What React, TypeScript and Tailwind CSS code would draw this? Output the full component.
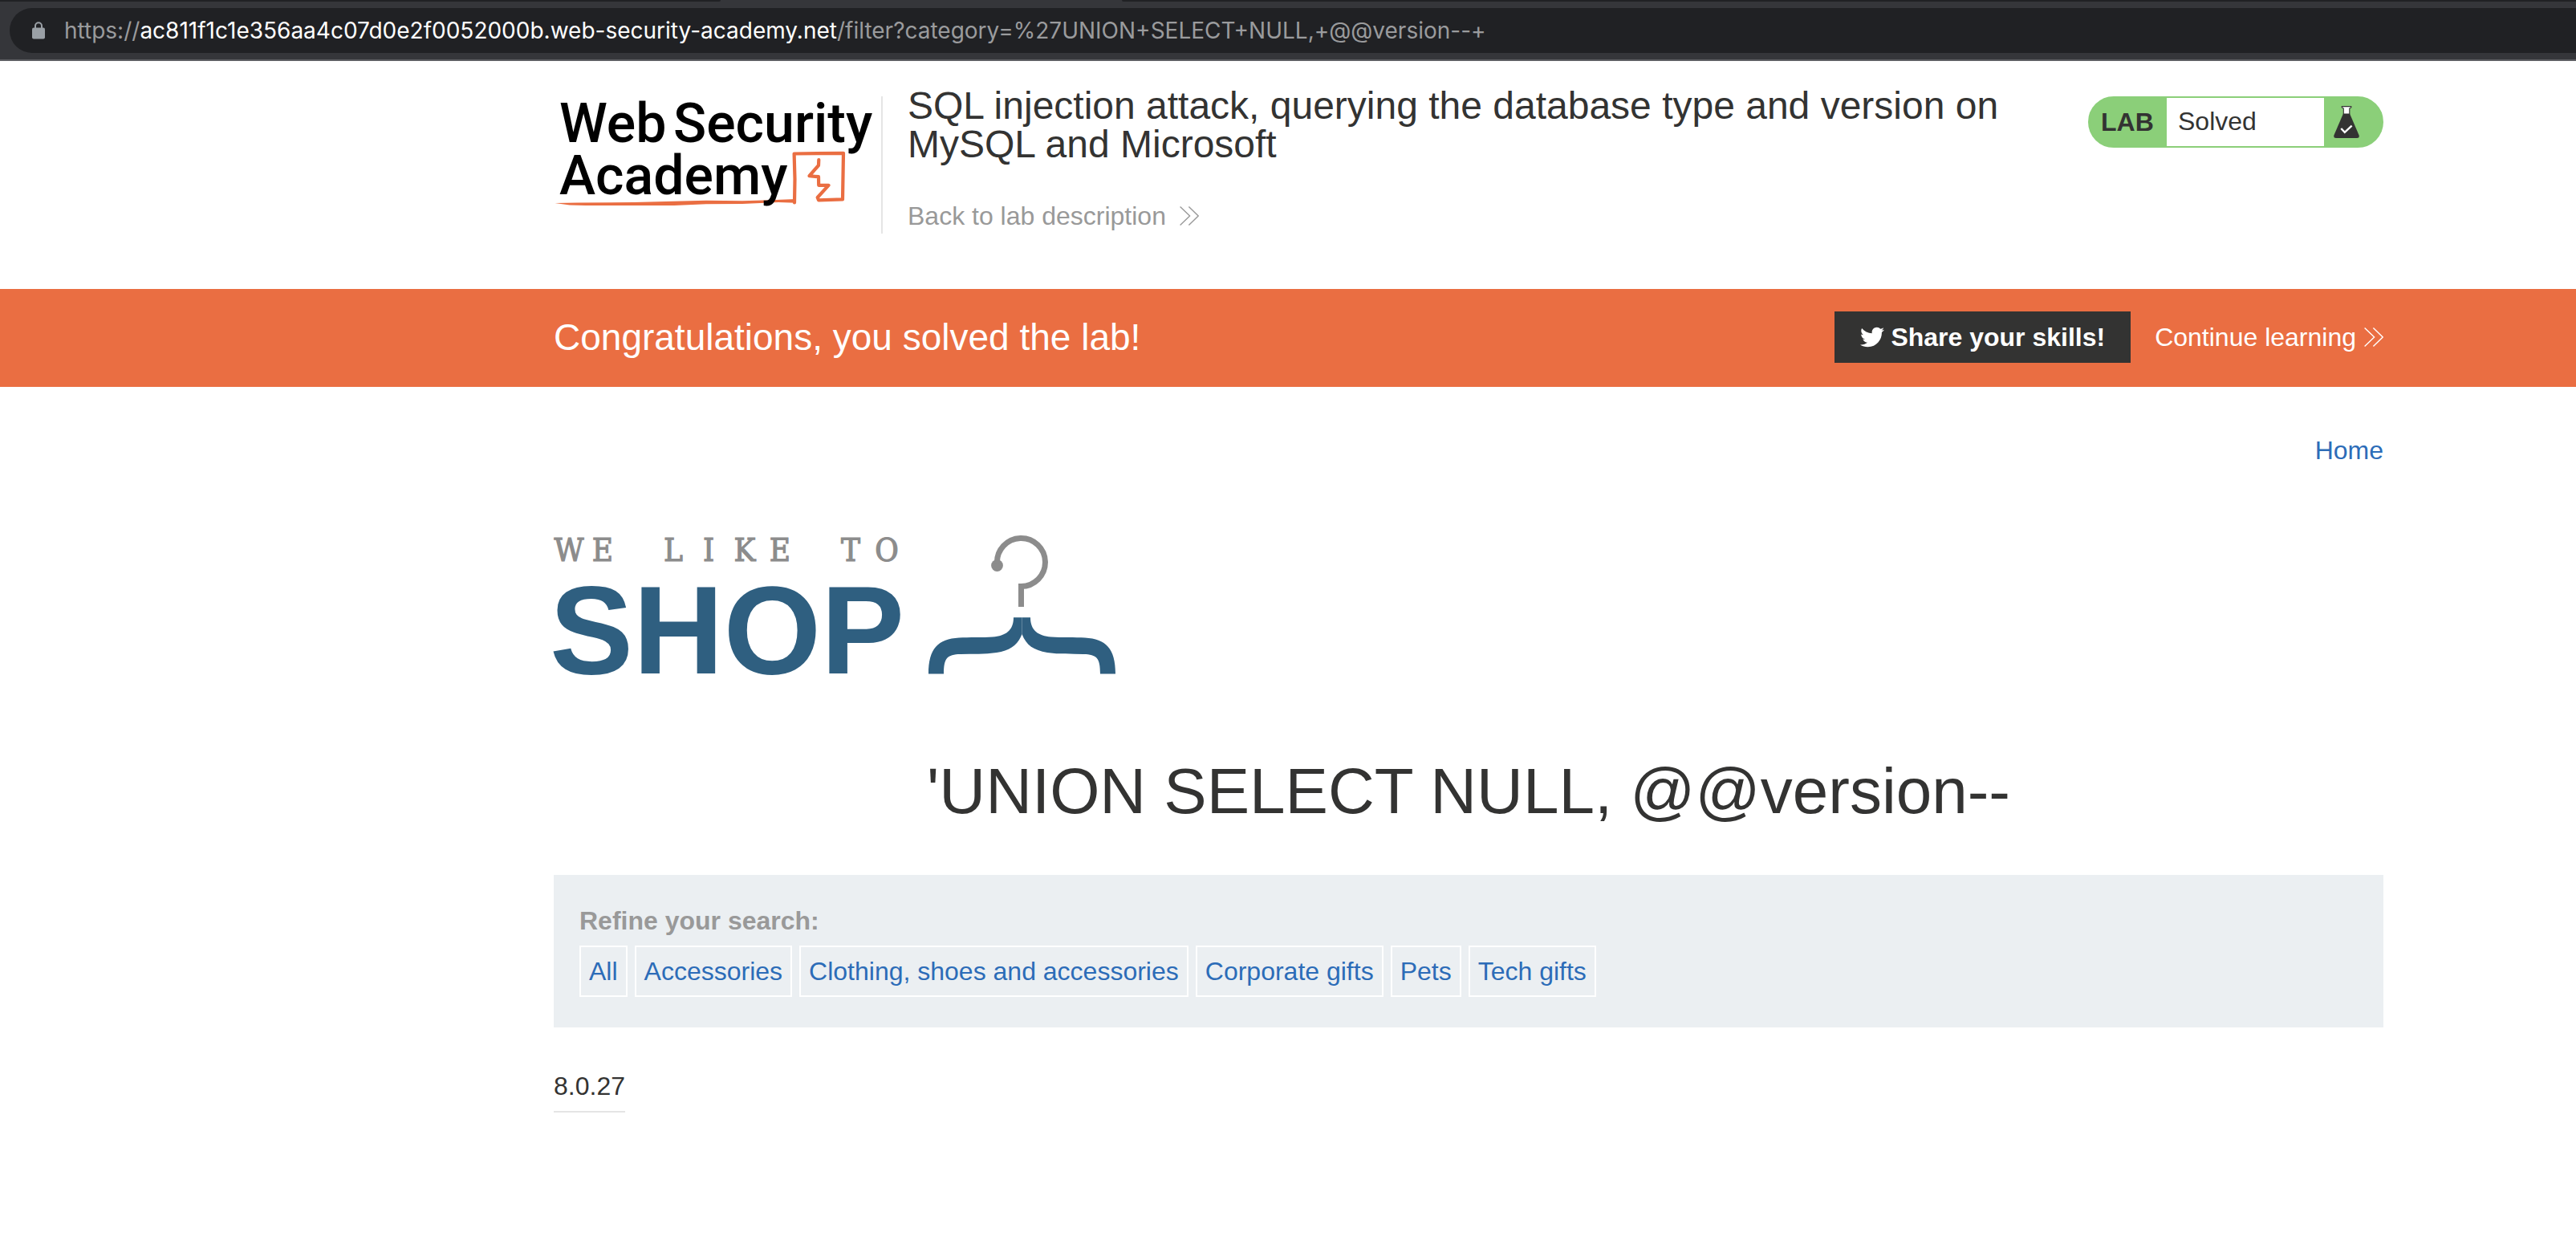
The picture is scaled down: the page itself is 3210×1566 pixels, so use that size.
import React from "react";
import { FaTwitter } from "react-icons/fa";

const categories = [
  "All",
  "Accessories",
  "Clothing, shoes and accessories",
  "Corporate gifts",
  "Pets",
  "Tech gifts",
];

function DoubleChevron() {
  return (
    <svg className="h-6 w-6 shrink-0" viewBox="0 0 24 24" fill="none" stroke="currentColor" strokeWidth="1.4" aria-hidden="true">
      <path d="M0.6 0.5 L12.6 12 L0.6 23.5" />
      <path d="M11.4 0.5 L23.2 12 L11.4 23.5" />
    </svg>
  );
}

function LockIcon() {
  return (
    <svg className="h-[22px] w-4 shrink-0" viewBox="0 0 16 22" aria-hidden="true">
      <path d="M4 8 V5.2 A4 4 0 0 1 12 5.2 V8" fill="none" stroke="#9aa0a6" strokeWidth="2" />
      <rect x="0" y="7.4" width="16" height="14" rx="2" fill="#9aa0a6" />
    </svg>
  );
}

function AcademyLogo() {
  return (
    <svg className="h-[140px] w-[400px] overflow-visible" viewBox="0 0 400 140" role="img" aria-label="Web Security Academy">
      <path
        d="M1.5 133 L30 132.4 L100 132 L190 129.8 L235 130.2 L270 129.2 L302 128 L302 132.8 L280 132 L235 134 L190 134.3 L150 136 L40 136 L20 135.6 Z"
        fill="#ea6e42"
      />
      <path
        d="M300 132.5 L300.5 103 L299.6 71.5 L361 70.8 L360 128.4 L330 129.3 L328.7 126 L342.5 110.8 L330.2 110.8 L330 100.2 L318.5 99.2 L330 86 L330.3 79"
        fill="none"
        stroke="#ea6e42"
        strokeWidth="4.2"
        strokeLinejoin="round"
        strokeLinecap="round"
      />
      <g className="font-['Roboto',sans-serif] font-medium text-[68px]" fill="#000">
        <text x="7" y="57">Web</text>
        <text x="149" y="57">Security</text>
        <text x="7" y="122">Academy</text>
      </g>
    </svg>
  );
}

const hangerArm =
  "M583.5 129.3 H594 C594 146 604 152 620 153.6 C632 154.6 650 153.8 662 154.6 C688 156 700 168 700 199.6 H681 C681 180 677 175.3 660 175 C645 174.6 630 175.4 615 173 C598 170 589 164 583.5 150 Z";

function ShopLogo() {
  return (
    <svg className="h-[210px] w-[710px] overflow-visible" viewBox="0 0 710 210" role="img" aria-label="We like to shop">
      <text
        x="19 61 105 149 193 238 282 326 370 415"
        y="59"
        textAnchor="middle"
        fill="#8c8c8c"
        stroke="#8c8c8c"
        strokeWidth="1.2"
        className="font-['DejaVu_Serif_Condensed','DejaVu_Serif',serif] text-[40px]"
      >
        WE LIKE TO
      </text>
      <text x="-5" y="199" fill="#2f5f80" className="font-['Liberation_Sans',Arial,sans-serif] text-[156px] font-bold">
        SHOP
      </text>
      <circle cx="552.5" cy="64.5" r="7.4" fill="#8c8c8c" />
      <path d="M552.5 62 A30 30 0 1 1 582.5 90.5 V116" fill="none" stroke="#8c8c8c" strokeWidth="7" />
      <path d={hangerArm} fill="#2f5f80" />
      <path d={hangerArm} fill="#2f5f80" transform="matrix(-1 0 0 1 1167 0)" />
    </svg>
  );
}

function FlaskIcon() {
  return (
    <svg className="h-10 w-8" viewBox="0 0 32 40" aria-hidden="true">
      <path d="M12 9.5 H20 L31.6 36.6 Q32.4 40 29 40 H3 Q-0.4 40 0.4 36.6 Z" fill="#333332" />
      <path d="M10.3 0.6 H21.8 V2 L19.8 3 V10 H12.3 V3 L10.3 2 Z" fill="#fff" stroke="#333332" strokeWidth="1.1" />
      <path d="M9.3 28 L13.8 32.8 L22.6 24.6" fill="none" stroke="#fff" strokeWidth="2.4" />
    </svg>
  );
}

function AddressBar() {
  return (
    <div className="bg-[#35363a] border-b-2 border-[#5f6064]">
      <div className="flex h-[2px]">
        <div className="w-[898px] rounded-br bg-[#202124]" />
        <div className="w-[500px]" />
        <div className="flex-1 rounded-bl bg-[#202124]" />
      </div>
      <div className="pt-2 pb-2 pl-3">
        <div className="flex h-14 items-center gap-6 rounded-l-full bg-[#202124] pl-7 font-['Inter',sans-serif] text-[28px] whitespace-nowrap text-[#9a9b9d]">
          <LockIcon />
          <div>
            https://<span className="text-white">ac811f1c1e356aa4c07d0e2f0052000b.web-security-academy.net</span>
            /filter?category=%27UNION+SELECT+NULL,+@@version--+
          </div>
        </div>
      </div>
    </div>
  );
}

export default function App() {
  return (
    <div className="min-h-screen bg-white font-['Liberation_Sans',Arial,sans-serif] text-[32px] leading-[48px] text-[#333332]">
      <AddressBar />

      <header className="flex items-start pt-8 pr-60 pb-[67px] pl-[690px]">
        <div className="mt-3 h-[171px] w-[410px] shrink-0 border-r-2 border-[#e5e5e5]">
          <AcademyLogo />
        </div>
        <div className="flex-1 pl-[31px]">
          <h2 className="text-[48px] leading-[48px]">
            SQL injection attack, querying the database type and version on MySQL and Microsoft
          </h2>
          <a href="#" className="mt-[41px] flex w-fit items-center gap-[17px] text-[#999]">
            Back to lab description
            <DoubleChevron />
          </a>
        </div>
        <div className="mt-3 flex h-16 shrink-0 items-stretch overflow-hidden rounded-full border-2 border-[#8bcf79] bg-[#8bcf79] leading-[60px]">
          <span className="w-24 pl-[14px] font-bold">LAB</span>
          <span className="w-[196px] bg-white pl-[14px] leading-[58px]">Solved</span>
          <span className="flex w-[72px] items-center pl-3">
            <FlaskIcon />
          </span>
        </div>
      </header>

      <section className="flex items-center justify-between bg-[#ea6e42] pt-7 pr-60 pb-[30px] pl-[690px] text-white">
        <h4 className="text-[46px] leading-[64px]">Congratulations, you solved the lab!</h4>
        <div className="flex items-center gap-[30px] leading-[64px]">
          <button type="button" className="flex items-center gap-2 bg-[#333332] px-8 font-bold">
            <FaTwitter className="size-[30px]" aria-hidden="true" />
            Share your skills!
          </button>
          <a href="#" className="flex items-center gap-[10px]">
            Continue learning
            <DoubleChevron />
          </a>
        </div>
      </section>

      <main className="pt-[55px] pr-60 pl-[690px]">
        <nav className="flex justify-end">
          <a href="#" className="text-[#2c6cb8]">Home</a>
        </nav>
        <div className="mt-[55px] flex">
          <ShopLogo />
        </div>
        <h1 className="mt-[88px] text-center text-[80px] leading-[96px]">{"'UNION SELECT NULL, @@version--"}</h1>
        <section className="mt-14 bg-[#ebeff2] px-8 pt-[33px] pb-[38px]">
          <p className="font-bold text-[#999]">Refine your search:</p>
          <div className="mt-[7px] flex flex-wrap gap-[9px]">
            {categories.map((name) => (
              <a key={name} href="#" className="border-2 border-white px-[10px] leading-[60px] text-[#2c6cb8]">
                {name}
              </a>
            ))}
          </div>
        </section>
        <table className="mt-[49px]">
          <tbody>
            <tr>
              <td className="border-b-2 border-[#e5e5e5] pb-[7px]">8.0.27</td>
            </tr>
          </tbody>
        </table>
      </main>
    </div>
  );
}
